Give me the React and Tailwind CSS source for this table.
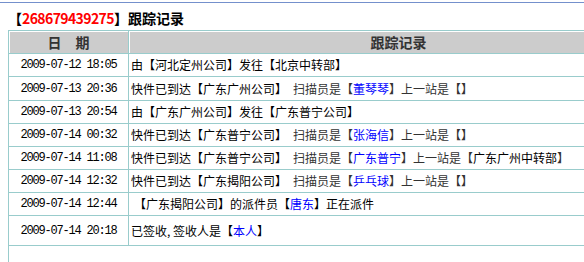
const rows = [
  { time: '2009-07-12 18:05', type: 'move', from: '河北定州公司', to: '北京中转部' },
  { time: '2009-07-13 20:36', type: 'arrive', site: '广东广州公司', scanner: '董琴琴', prev: '', h: 'h-[24px]' },
  { time: '2009-07-13 20:54', type: 'move', from: '广东广州公司', to: '广东普宁公司' },
  { time: '2009-07-14 00:32', type: 'arrive', site: '广东普宁公司', scanner: '张海信', prev: '' },
  { time: '2009-07-14 11:08', type: 'arrive', site: '广东普宁公司', scanner: '广东普宁', prev: '广东广州中转部' },
  { time: '2009-07-14 12:32', type: 'arrive', site: '广东揭阳公司', scanner: '乒乓球', prev: '' },
  { time: '2009-07-14 12:44', type: 'dispatch', site: '广东揭阳公司', courier: '唐东' },
  { time: '2009-07-14 20:18', type: 'signed', who: '本人', h: 'h-[30px]' },
]

function Content({ row }) {
  if (row.type === 'move') {
    return <span>由【{row.from}】发往【{row.to}】</span>
  }
  if (row.type === 'arrive') {
    return (
      <>
        <span>快件已到达【{row.site}】</span>
        <span className="ml-[6px] text-[#333]">
          扫描员是【<span className="text-[#0000ff]">{row.scanner}</span>】上一站是【<span className="text-black">{row.prev}</span>】
        </span>
      </>
    )
  }
  if (row.type === 'dispatch') {
    return (
      <span className="ml-[3px]">
        【{row.site}】的派件员【<span className="text-[#0000ff]">{row.courier}</span>】正在派件
      </span>
    )
  }
  return (
    <span>
      已签收, 签收人是【<span className="text-[#0000ff]">{row.who}</span>】
    </span>
  )
}

export default function App() {
  return (
    <div className="h-[262px] w-full overflow-hidden bg-white font-['Noto_Sans_CJK_SC',sans-serif] text-black">
      <div className="mt-[2px] h-px w-full bg-[#7490cc]" />
      <div className="h-[27px] pl-[8px] pt-[7px] text-[14px] font-bold leading-[16px]">
        【<span className="tracking-[-0.6px] text-[#ff0000]">268679439275</span>】跟踪记录
      </div>
      <div className="ml-[8px] w-[660px] border-l border-t border-[#99cccc] text-[12px] leading-[14px]">
        <div className="flex h-[23px] border-b border-[#99cccc] text-[14px] font-bold text-[#333]">
          <div className="flex w-[120px] items-center justify-center border-r border-[#99cccc] bg-[#cccccc] shadow-[inset_1px_1px_0_#fff]">
            日　期
          </div>
          <div className="flex flex-1 items-center justify-center bg-[#cccccc] shadow-[inset_1px_1px_0_#fff]">
            跟踪记录
          </div>
        </div>
        {rows.map((row) => (
          <div key={row.time} className={`flex border-b border-[#99cccc] ${row.h || 'h-[23px]'}`}>
            <div className="flex w-[120px] items-center justify-center border-r border-[#99cccc] font-['Liberation_Mono',monospace] tracking-[-1.2px]">
              {row.time}
            </div>
            <div className="flex flex-1 items-center whitespace-pre pl-[2px]">
              <Content row={row} />
            </div>
          </div>
        ))}
        <div className="h-[40px]" />
      </div>
    </div>
  )
}
